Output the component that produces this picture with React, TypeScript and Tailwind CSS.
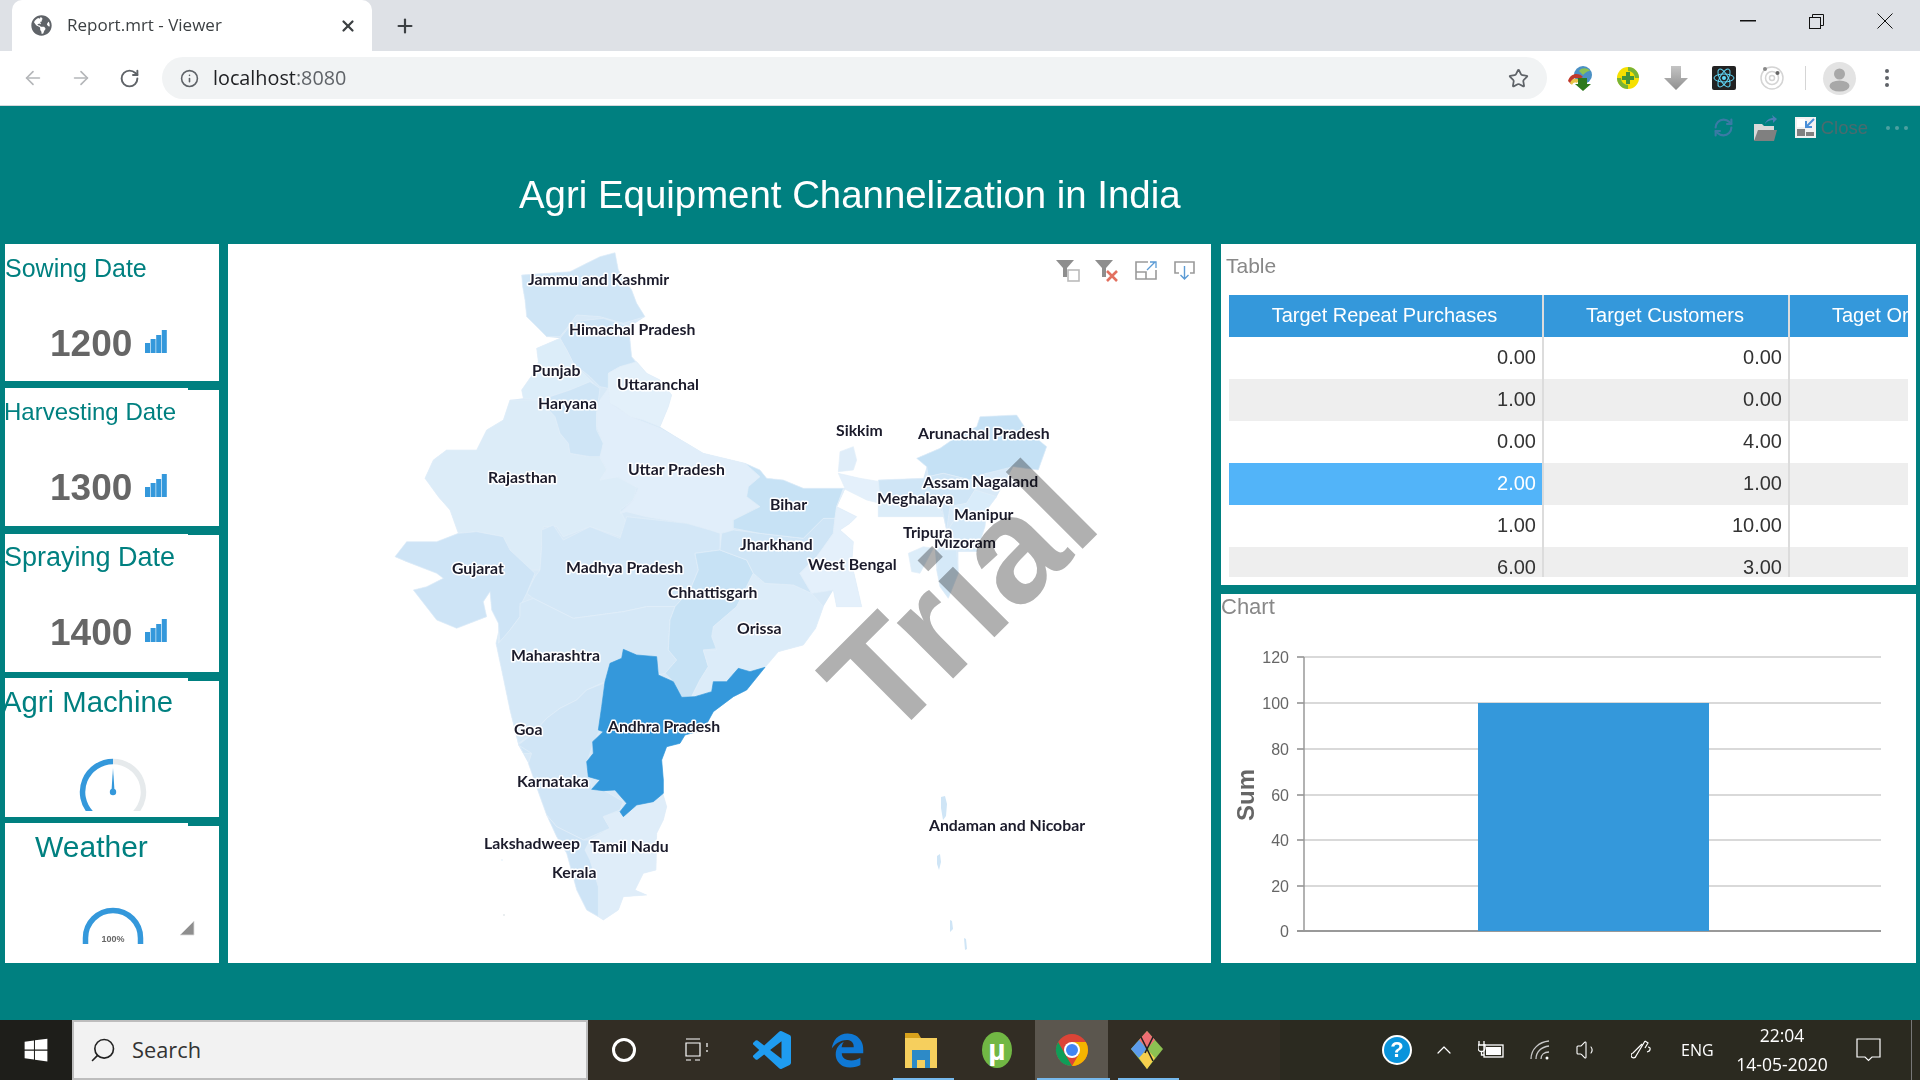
import React from "react";
import { ArrowLeft, ArrowRight, RotateCw, RefreshCw, Info, Star, Plus, X, Search, ChevronUp, Volume1 } from "lucide-react";
import { FaGlobeAmericas, FaWindows, FaEdgeLegacy } from "react-icons/fa";

const z6 = (s: string) => s.split(" ").map((p) => { const [x, y] = p.split(","); return `${x},${+y + 1140}`; }).join(" ");
const z7 = (s: string) => s.split(" ").map((p) => { const [x, y] = p.split(","); return `${+x + 1290},${y}`; }).join(" ");

const base: string[] = [
  "455,105 530,100 600,95 650,70 690,50 735,38 745,90 785,150 800,190 825,230 780,260 780,300 785,350 800,365 830,400 870,420 905,465 895,500 870,560 950,610 1000,640 1125,670 1170,690 1190,715 1240,720 1300,745 1425,745 1400,800 1460,830 1440,850 1410,870 1450,905 1445,970 1475,1100 1400,1100 1390,1050 1360,1100 1337,1165 " +
    z6("1300,75 1225,95 1185,142 1130,210 1090,230 1030,275 1000,330 945,345 930,370 890,380 875,420 880,480 880,525 890,560 880,600 860,640 858,750 820,760 795,810 830,825 760,830 745,870 700,900 685,890 650,870 620,810 590,700 560,650 530,585 510,530 475,430 445,375 420,270 395,150 378,70 385,40") +
    " 385,1150 365,1110 360,1055 340,1085 350,1130 260,1165 200,1140 130,1050 170,1040 220,1015 200,1000 110,965 75,950 110,905 200,905 265,880 240,810 205,770 165,715 190,660 230,630 320,630 350,570 400,540 420,480 460,475 455,450 490,400 505,365 500,325 570,295 530,290 505,265 470,230 465,180 458,140",
  z7("235,720 370,715 380,680 350,655 420,625 470,590 530,560 540,530 650,525 680,570 740,620 715,690 640,680 590,770 560,810 555,860 530,935 475,935 475,1000 445,1075 420,1040 410,990 405,930 440,875 430,830 235,830"),
];

const states: { f: string; p: string }[] = [
  { f: "#cfe5f6", p: "455,105 530,100 600,95 650,70 690,50 735,38 745,90 785,150 800,190 825,230 760,250 690,230 620,225 590,265 570,290 530,290 505,265 470,230 465,180 458,140" },
  { f: "#cde4f6", p: "570,295 610,245 700,235 780,260 780,300 785,350 800,370 750,380 715,400 715,445 690,440 660,410 610,370 590,330" },
  { f: "#dcedf9", p: "500,325 570,295 590,330 610,370 650,410 670,430 600,450 510,480 460,475 455,450 490,400 505,365" },
  { f: "#dcecf8", p: "420,480 510,480 555,530 570,580 595,610 600,640 660,650 690,650 710,690 690,720 740,710 800,740 790,780 750,810 770,850 750,890 660,860 580,890 560,860 520,860 515,920 510,990 480,990 420,930 400,890 320,875 265,880 240,810 205,770 165,715 190,660 230,630 320,630 350,570 400,540" },
  { f: "#cfe5f6", p: "510,480 600,450 660,425 690,445 680,520 680,570 700,610 695,650 660,650 600,640 595,610 570,580 555,530" },
  { f: "#e3f0fa", p: "715,400 750,380 800,365 830,400 870,420 905,465 895,500 870,560 820,540 780,530 740,500 720,490 715,445" },
  { f: "#e1eefa", p: "690,480 715,445 720,490 780,530 870,565 950,610 1000,640 1125,670 1170,710 1135,740 1130,770 1170,800 1090,840 1090,870 1055,880 1050,930 1020,870 950,850 830,830 770,815 750,820 790,780 805,745 745,710 690,720 710,690 690,650 700,610 680,560 680,520" },
  { f: "#d3e7f7", p: "515,870 550,855 580,900 660,860 750,895 770,830 950,850 1020,870 1050,880 1050,930 975,940 985,990 960,1050 915,1100 830,1100 760,1115 610,1135 490,1075 470,1060 495,1010 510,990 515,920" },
  { f: "#cee4f6", p: "75,950 110,905 200,905 265,880 320,875 400,890 420,930 495,1000 470,1060 450,1100 450,1130 420,1170 390,1210 385,1150 365,1110 360,1055 340,1085 350,1130 260,1165 200,1140 130,1050 170,1040 220,1015 200,1000 110,965" },
  { f: "#d5e8f7", p: "385,1210 420,1170 450,1130 450,1090 490,1075 610,1135 760,1115 830,1100 915,1100 900,1140 " + z6("895,90 920,120 885,160 865,165 860,110 800,105 760,88 755,115 720,130 705,185 650,210 620,240 570,265 530,295 490,340 445,370 420,270 395,150 378,70 385,40") },
  { f: "#cfe5f6", p: z6("445,372 490,345 485,400 460,400") },
  { f: "#d0e5f6", p: z6("700,190 650,210 620,240 570,265 530,295 490,340 445,375 485,400 475,430 510,530 530,585 560,620 640,660 720,625 700,590 750,570 760,545 700,510 665,505 660,480 650,430 670,370 690,330 695,260 705,190") },
  { f: "#dfedf9", p: z6("760,590 800,555 850,545 880,525 890,560 880,600 860,640 858,750 820,760 795,810 830,825 760,830 745,870 700,900 685,890 685,800 660,720 645,690 660,660 720,625 700,590 750,575") },
  { f: "#cee4f6", p: z6("530,585 560,620 640,660 660,660 645,690 660,720 685,800 685,890 650,870 620,810 590,700 560,650") },
  { f: "#c7e2f5", p: "975,940 1050,930 1130,960 1150,1000 1100,1100 1030,1160 1050,1225 " + z6("1000,90 1015,140 990,180 965,230 935,232 910,185 885,160 920,120 895,90 900,0") + " 915,1100 960,1050 985,990" },
  { f: "#dcecf9", p: "1150,1000 1185,1030 1270,1035 1325,1060 1360,1100 1337,1165 " + z6("1300,75 1225,95 1185,142 1140,155 1105,145 1070,185 1030,185 1025,215 965,230 990,180 1015,140 1000,90 1040,90 1025,50 1030,20") + " 1100,1100" },
  { f: "#cfe5f6", p: "1090,870 1170,880 1300,895 1360,835 1395,835 1390,880 1360,925 1340,950 1290,1000 1325,1060 1270,1035 1185,1030 1150,1000 1130,960 1050,930 1055,880" },
  { f: "#c7e2f5", p: "1125,670 1170,690 1190,715 1240,720 1300,745 1425,745 1400,800 1395,835 1360,835 1300,895 1170,880 1090,865 1090,840 1170,800 1130,770 1135,740 1170,710" },
  { f: "#e4f0fb", p: "1405,700 1470,715 1530,725 1530,790 1490,780 1420,745 1400,800 1460,830 1440,850 1410,870 1450,905 1445,970 1475,1100 1400,1100 1390,1050 1325,1060 1290,1000 1340,950 1390,880 1395,835 1400,800 1425,745" },
  { f: "#dfedf9", p: "1410,635 1450,620 1460,660 1450,690 1405,695" },
  { f: "#c5e1f5", p: z7("350,655 420,625 470,590 530,560 540,530 650,525 680,570 740,620 715,690 640,680 560,700 510,720 430,700 385,710 380,680") },
  { f: "#cfe5f6", p: z7("235,720 370,715 385,710 430,700 510,720 560,700 525,750 500,790 450,800 440,870 425,800 350,785 240,780") },
  { f: "#dcedf9", p: z7("235,785 350,790 420,805 430,830 330,830 235,830") },
  { f: "#d9ecfa", p: z7("525,750 590,770 560,810 470,830 450,800 500,790") },
  { f: "#d5e9f8", p: z7("470,830 560,810 555,860 530,935 470,930 440,875") },
  { f: "#d5e9f8", p: z7("420,930 470,930 475,1000 445,1075 420,1040 410,990") },
  { f: "#dcedf9", p: z7("325,940 370,920 400,925 360,1000 335,995") },
  { f: "#3498db", p: z6("760,88 800,105 860,110 865,165 910,185 935,232 975,230 1025,215 1030,185 1070,185 1105,145 1140,155 1185,142 1130,210 1090,230 1030,275 1000,330 945,345 930,370 890,380 875,420 880,480 880,520 850,545 800,555 760,590 750,575 770,550 735,510 700,512 665,508 690,480 655,470 650,425 670,400 668,365 700,335 685,330 695,260 705,185 720,130 755,115") },
];

const labels: [string, number, number][] = [
  ["Jammu and Kashmir", 528, 278], ["Himachal Pradesh", 569, 328], ["Punjab", 532, 369], ["Haryana", 538, 402],
  ["Uttaranchal", 617, 383], ["Rajasthan", 488, 476], ["Uttar Pradesh", 628, 468], ["Bihar", 770, 503],
  ["Jharkhand", 740, 543], ["Gujarat", 452, 567], ["Madhya Pradesh", 566, 566], ["Chhattisgarh", 668, 591],
  ["Orissa", 737, 627], ["Maharashtra", 511, 654], ["Andhra Pradesh", 608, 725], ["Goa", 514, 728],
  ["Karnataka", 517, 780], ["Lakshadweep", 484, 842], ["Tamil Nadu", 590, 845], ["Kerala", 552, 871],
  ["Sikkim", 836, 429], ["Arunachal Pradesh", 918, 432], ["Mizoram", 934, 541], ["Assam", 923, 481], ["Nagaland", 972, 480],
  ["Meghalaya", 877, 497], ["Manipur", 954, 513], ["Tripura", 903, 531], ["West Bengal", 808, 563],
  ["Andaman and Nicobar", 929, 824],
];

function Bars() {
  return (
    <svg width="22" height="23" viewBox="0 0 22 23" className="block mb-[5px] -ml-[1px]">
      <rect x="0" y="13" width="5" height="10" fill="#3498db" />
      <rect x="5.6" y="9" width="5" height="14" fill="#3498db" />
      <rect x="11.2" y="5" width="5" height="18" fill="#3498db" />
      <rect x="16.8" y="0" width="5" height="23" fill="#3498db" />
    </svg>
  );
}

function Card({ title, titleClass, notch, body, gapClass, children }: { title: string; titleClass: string; notch: string; body: string; gapClass: string; children: React.ReactNode }) {
  return (
    <div className={gapClass}>
      <div className={`w-[183px] bg-white ${notch}`} />
      <div className={`bg-white overflow-hidden ${body}`}>
        <div className={`text-[#008080] whitespace-nowrap ${titleClass}`}>{title}</div>
        {children}
      </div>
    </div>
  );
}

function Num({ v }: { v: string }) {
  return (
    <div className="flex items-center pl-[45px] gap-[14px] h-[40px] mt-[42px]">
      <span className="text-[37px] leading-[40px] font-bold text-[#666666]">{v}</span>
      <Bars />
    </div>
  );
}

function MapPanel() {
  return (
    <div className="w-[983px] h-[719px] bg-white">
      <svg width="983" height="719" viewBox="228 244 983 719" className="block">
        <g transform="translate(370 240) scale(0.33333)">
          {base.map((p, i) => (
            <polygon key={i} points={p} fill="#d8e9f7" />
          ))}
          {states.map((s, i) => (
            <polygon key={i} points={s.p} fill={s.f} stroke={s.f === "#3498db" ? "#3498db" : "#e3eff9"} strokeWidth="2" strokeLinejoin="round" />
          ))}
        </g>
        <path d="M941 797l4-1 2 8-1 12-3 4-2-12zM937 856l3-2 1 8-2 8-2-6zM950 920l2 1 1 8-3 3zM964 938l2 1 1 10-2 1z" fill="#cfe5f6" />
        <circle cx="502" cy="860" r="0.8" fill="#dcedf9" />
        <circle cx="504" cy="915" r="0.8" fill="#cfd8de" />
        {labels.map(([t, x, y]) => (
          <text key={t} x={x} y={y} dominantBaseline="central" className="font-['Lato',sans-serif] font-bold text-[15.800px] fill-[#1b1b2b] stroke-white stroke-[3px] [paint-order:stroke] [stroke-linejoin:round]">{t}</text>
        ))}
        <text x="959" y="599" textAnchor="middle" dominantBaseline="central" transform="rotate(-45 959 599)" className="font-['Liberation_Sans',sans-serif] font-bold text-[150px] fill-[#b0b0b0] mix-blend-multiply">Trial</text>
        <g transform="translate(1056 260)">
          <path d="M0 0h18l-7 8v9h-4v-9z" fill="#8e8e8e" />
          <rect x="12" y="10" width="11" height="11" fill="#fff" stroke="#bbb" strokeWidth="1.6" />
        </g>
        <g transform="translate(1095 260)">
          <path d="M0 0h18l-7 8v9h-4v-9z" fill="#8e8e8e" />
          <path d="M12 11l10 10M22 11l-10 10" stroke="#e2705f" strokeWidth="2.6" />
        </g>
        <g transform="translate(1135 261)" fill="none">
          <path d="M13 1H1v17h20V9M1 11h10v7" stroke="#9a9a9a" strokeWidth="1.6" />
          <path d="M12 9l8-8M15 1h6v6" stroke="#5b9bd5" strokeWidth="1.3" />
        </g>
        <g transform="translate(1174 261)" fill="none">
          <path d="M5 12H1V1h19v11h-4" stroke="#9a9a9a" strokeWidth="1.6" />
          <path d="M10.500 5v13M6.500 14l4 4 4-4" stroke="#5b9bd5" strokeWidth="1.4" />
        </g>
      </svg>
    </div>
  );
}

function TablePanel() {
  const rows: [string, string][] = [["0.00", "0.00"], ["1.00", "0.00"], ["0.00", "4.00"], ["2.00", "1.00"], ["1.00", "10.00"], ["6.00", "3.00"]];
  return (
    <div className="h-[341px] bg-white pl-[8px] pr-[8px]">
      <div className="h-[51px] text-[21px] leading-[44px] text-[#888888] -ml-[3px]">Table</div>
      <div className="h-[282px] overflow-hidden">
        <div className="grid grid-cols-[315px_246px_240px] h-[42px] bg-[#3498db] text-white text-[20px] leading-[40px]">
          <div className="text-center pr-[2px] border-r-2 border-[#dcdcdc] whitespace-nowrap">Target Repeat Purchases</div>
          <div className="text-center pr-[2px] border-r-2 border-[#dcdcdc] whitespace-nowrap">Target Customers</div>
          <div className="pl-[42px] whitespace-nowrap">Taget Orders</div>
        </div>
        {rows.map(([a, b], i) => (
          <div key={i} className={`grid grid-cols-[315px_246px_240px] h-[42px] text-[20px] leading-[40px] text-[#333333] ${i % 2 ? "bg-[#eeeeee]" : "bg-white"}`}>
            <div className={`text-right pr-[6px] border-r-2 border-[#dcdcdc] ${i === 3 ? "bg-[#52b4f9] text-white" : ""}`}>{a}</div>
            <div className="text-right pr-[6px] border-r-2 border-[#dcdcdc]">{b}</div>
            <div />
          </div>
        ))}
      </div>
    </div>
  );
}

function ChartPanel() {
  const ticks = [[120, 657], [100, 703], [80, 749], [60, 795], [40, 840], [20, 886], [0, 931]];
  return (
    <div className="h-[369px] bg-white">
      <div className="h-[30px] text-[22px] leading-[25px] text-[#888888]">Chart</div>
      <svg width="695" height="339" viewBox="1221 624 695 339" className="block">
        {ticks.map(([v, y]) => (
          <g key={v}>
            <line x1="1297" x2="1881" y1={y} y2={y} stroke={v === 0 ? "#999999" : "#cccccc"} strokeWidth={v === 0 ? 2 : 1.5} />
            <line x1="1297" x2="1304" y1={y} y2={y} stroke="#999999" strokeWidth="1.5" />
            <text x="1289" y={y} textAnchor="end" dominantBaseline="central" className="font-['Liberation_Sans',sans-serif] text-[16px] fill-[#666666]">{v}</text>
          </g>
        ))}
        <line x1="1304" x2="1304" y1="657" y2="932" stroke="#999999" strokeWidth="1.500" />
        <rect x="1478" y="703" width="231" height="228" fill="#3498db" />
        <text x="1245" y="795" textAnchor="middle" dominantBaseline="central" transform="rotate(-90 1245 795)" className="font-['Liberation_Sans',sans-serif] font-bold text-[24px] fill-[#666666]">Sum</text>
      </svg>
    </div>
  );
}

function Chrome() {
  return (
    <svg width="36" height="36" viewBox="-18 -18 36 36">
      <circle r="16" fill="#db4437" />
      <path d="M-13.900 8A16 16 0 0 1-13.900-8L-7 4 0 16A16 16 0 0 1-13.900 8z" fill="#0f9d58" />
      <path d="M0 16A16 16 0 0 0 16 0 16 16 0 0 0 13.900-8H0L7 4z" fill="#f4b400" />
      <circle r="8" fill="#fff" />
      <circle r="6" fill="#4285f4" />
    </svg>
  );
}

export default function App() {
  return (
    <div className="w-[1920px] h-[1080px] overflow-hidden flex flex-col font-['Liberation_Sans',Arial,sans-serif]">
      <div className="h-[51px] bg-[#dee1e6] flex items-stretch shrink-0">
        <div className="ml-[12px] w-[360px] bg-white rounded-t-[10px] flex items-center pl-[19px] pr-[15px] font-['Open_Sans',sans-serif] text-[#3c4043]">
          <FaGlobeAmericas size={21} color="#5f6368" />
          <span className="ml-[15px] pb-[2px] text-[17px] flex-1 whitespace-nowrap">Report.mrt - Viewer</span>
          <X size={18} strokeWidth={3} color="#3c4043" />
        </div>
        <div className="ml-[22px] flex items-center"><Plus size={22} strokeWidth={2.4} color="#3c4043" /></div>
        <div className="flex-1" />
        <div className="flex items-center pr-[27px] h-[42px] gap-[53px]">
          <svg width="16" height="2" className="block"><rect width="16" height="1.500" fill="#111" /></svg>
          <svg width="15" height="15" viewBox="0 0 15 15" fill="none" stroke="#111" strokeWidth="1"><rect x="0.500" y="3.500" width="11" height="11" /><path d="M3.500 3.500V.5h11v11h-3" /></svg>
          <svg width="16" height="16" viewBox="0 0 16 16" stroke="#111" strokeWidth="1"><path d="M.5.5l15 15M15.500.5l-15 15" /></svg>
        </div>
      </div>
      <div className="h-[55px] bg-white border-b border-[#d5d8dc] flex items-center shrink-0">
        <ArrowLeft className="ml-[22px]" size={22} color="#b4b6b9" strokeWidth={1.8} />
        <ArrowRight className="ml-[26px]" size={22} color="#b4b6b9" strokeWidth={1.8} />
        <RotateCw className="ml-[27px]" size={21} color="#5f6368" strokeWidth={2.2} />
        <div className="ml-[22px] w-[1385px] h-[42px] bg-[#f1f3f4] rounded-full flex items-center pl-[18px] pr-[18px] font-['Open_Sans',sans-serif]">
          <Info size={19} color="#5f6368" />
          <span className="ml-[14px] text-[19.800px] text-[#202124]">localhost<span className="text-[#5f6368]">:8080</span></span>
          <span className="flex-1" />
          <Star size={21} color="#5f6368" strokeWidth={2} />
        </div>
        <div className="ml-[20px] flex items-center">
          <svg width="26" height="26" viewBox="0 0 26 26">
            <circle cx="16" cy="10" r="9" fill="#4a90c4" />
            <path d="M12 6c3-4 9-3 11 0-3 0-5 2-7 4z" fill="#8cc152" />
            <path d="M1 16C3 8 12 7 16 12l-4 2C9 12 5 13 4 19z" fill="#c0392b" />
            <path d="M3 18C5 13 9 13 12 15l-2 3c-3-1-4 0-5 2z" fill="#e8c547" />
            <path d="M11 13h9v6h4l-8 7-8-7h3z" fill="#2d7a1e" />
          </svg>
          <svg className="ml-[24px]" width="22" height="22" viewBox="0 0 22 22">
            <circle cx="11" cy="11" r="11" fill="#f6e000" />
            <path d="M11 0a11 11 0 0 1 11 11h-4a7 7 0 0 0-7-7zM11 22A11 11 0 0 1 0 11h4a7 7 0 0 0 7 7z" fill="#57a745" opacity="0.800" />
            <path d="M9 5h4v4h4v4h-4v4H9v-4H5V9h4z" fill="#43933a" />
          </svg>
          <svg className="ml-[25px]" width="24" height="24" viewBox="0 0 24 24">
            <defs><linearGradient id="dl" x1="0" x2="0" y1="0" y2="1"><stop offset="0" stopColor="#c4c4c4" /><stop offset="1" stopColor="#8f8f8f" /></linearGradient></defs>
            <path d="M7 0h10v12h7L12 24 0 12h7z" fill="url(#dl)" />
          </svg>
          <div className="ml-[24px] w-[24px] h-[24px] bg-[#222222] rounded-[2px] flex items-center justify-center">
            <svg width="22" height="22" viewBox="-11 -11 22 22" fill="none" stroke="#61dafb" strokeWidth="1">
              <ellipse rx="10" ry="4" /><ellipse rx="10" ry="4" transform="rotate(60)" /><ellipse rx="10" ry="4" transform="rotate(120)" />
              <circle r="2" fill="#61dafb" stroke="none" />
            </svg>
          </div>
          <svg className="ml-[24px]" width="24" height="24" viewBox="0 0 24 24" fill="none" stroke="#d4d4d4" strokeWidth="1.500">
            <circle cx="12" cy="12" r="11" /><circle cx="12" cy="12" r="6.500" /><circle cx="12" cy="12" r="2.500" />
            <circle cx="5" cy="3" r="2" fill="#888" stroke="none" /><circle cx="17.500" cy="7" r="2" fill="#666" stroke="none" />
          </svg>
          <div className="ml-[21px] w-px h-[24px] bg-[#d5d5d5]" />
          <div className="ml-[17px] w-[33px] h-[33px] rounded-full bg-[#e3e3e3] overflow-hidden">
            <svg width="33" height="33" viewBox="0 0 33 33"><circle cx="16.500" cy="12" r="5.500" fill="#a8a8a8" /><ellipse cx="16.500" cy="24" rx="10" ry="5.500" fill="#a8a8a8" /></svg>
          </div>
          <svg className="ml-[28px]" width="6" height="20" viewBox="0 0 6 20" fill="#5f6368"><circle cx="3" cy="3" r="2" /><circle cx="3" cy="10" r="2" /><circle cx="3" cy="17" r="2" /></svg>
        </div>
      </div>
      <div className="h-[914px] bg-[#008080] shrink-0">
        <div className="h-[43px] flex items-center justify-end pr-[12px]">
          <RefreshCw size={21} color="#3a7aa5" strokeWidth={2.4} />
          <svg className="ml-[20px]" width="23" height="26" viewBox="0 0 23 26">
            <path d="M0 9h8l2 2h10v14H0z" fill="#d9d9d9" /><path d="M4 15h19l-3 11H0z" fill="#808080" /><path d="M11 9c1-4 5-6 8-6l-1-3 5 4-4 4V5c-3 0-6 1-8 4z" fill="#4a7fb5" />
          </svg>
          <svg className="ml-[18px]" width="21" height="21" viewBox="0 0 21 21">
            <rect width="21" height="21" fill="#f2f2f2" /><path d="M2 12h8v7H2zM11 15h8v4h-8z" fill="#808080" /><path d="M2 2h8v8H2z" fill="#fff" /><path d="M19 2l-8 8M11 4v6h6" stroke="#4a8fd8" strokeWidth="2" fill="none" />
          </svg>
          <span className="ml-[5px] text-[18.500px] text-[#4a6b6e]">Close</span>
          <span className="ml-[18px] flex gap-[5px]">
            <i className="w-[4px] h-[4px] rounded-full bg-[#4da0a0]" /><i className="w-[4px] h-[4px] rounded-full bg-[#4da0a0]" /><i className="w-[4px] h-[4px] rounded-full bg-[#4da0a0]" />
          </span>
        </div>
        <div className="mt-[23px] h-[72px] pl-[519px] text-white text-[38.400px] leading-[46px] whitespace-nowrap">Agri Equipment Channelization in India</div>
        <div className="flex h-[719px]">
          <div className="w-[214px] ml-[5px] flex flex-col">
            <Card title="Sowing Date" titleClass="text-[25px] leading-[28px] pt-[10px]" notch="h-0" body="h-[137px]" gapClass="mb-[7px]"><Num v="1200" /></Card>
            <Card title="Harvesting Date" titleClass="text-[24px] leading-[28px] pt-[8px] -ml-[1px]" notch="h-[2px]" body="h-[136px]" gapClass="mb-[8px]"><Num v="1300" /></Card>
            <Card title="Spraying Date" titleClass="text-[27px] leading-[28px] pt-[8px] -ml-[1px]" notch="h-[1px]" body="h-[137px]" gapClass="mb-[6px]"><Num v="1400" /></Card>
            <Card title="Agri Machine" titleClass="text-[29.300px] leading-[32px] pt-[5px] -ml-[3px]" notch="h-[3px]" body="h-[136px]" gapClass="mb-[6px]">
              <svg width="214" height="93" viewBox="5 718 214 93" className="block">
                <path d="M113 761.500a30.500 30.500 0 0 1 21.600 52" fill="none" stroke="#e6eaec" strokeWidth="5.500" />
                <path d="M113 761.500a30.500 30.500 0 0 0-21.600 52" fill="none" stroke="#3498db" strokeWidth="5.500" />
                <path d="M113 768l1.600 24h-3.200z" fill="#3498db" />
                <circle cx="113" cy="792" r="3.200" fill="#3498db" />
              </svg>
            </Card>
            <Card title="Weather" titleClass="text-[30px] leading-[34px] pt-[4px] pb-[2px] pl-[30px]" notch="h-[3px]" body="h-[137px]" gapClass="">
              <svg width="214" height="97" viewBox="5 866 214 97" className="block">
                <path d="M85.500 944v-6a27.500 27.500 0 0 1 55 0v6" fill="none" stroke="#3498db" strokeWidth="5.500" />
                <text x="113" y="939" textAnchor="middle" dominantBaseline="central" className="font-bold text-[9px] fill-[#666666]">100%</text>
                <path d="M180 935l14-14v14z" fill="#8e8e8e" stroke="#dddddd" strokeWidth="0.800" />
              </svg>
            </Card>
          </div>
          <div className="ml-[9px]"><MapPanel /></div>
          <div className="ml-[10px] w-[695px] flex flex-col gap-[9px]">
            <TablePanel />
            <ChartPanel />
          </div>
        </div>
      </div>
      <div className="h-[60px] bg-[#2b2a20] flex items-center shrink-0 relative">
        <div className="w-[72px] h-full shrink-0 bg-[#1e1e1a] flex items-center justify-center"><FaWindows size={26} color="#ffffff" /></div>
        <div className="w-[516px] h-full shrink-0 bg-[#f2f2f2] border-2 border-[#bdbdbd] flex items-center pl-[15px]">
          <Search size={28} color="#222222" strokeWidth={1.4} className="-scale-x-100" />
          <span className="ml-[15px] text-[21.800px] text-[#333333] font-['Open_Sans',sans-serif]">Search</span>
        </div>
        <div className="flex-1 min-w-0 h-full flex items-center">
          <div className="h-full flex items-center bg-[#322d24] w-[692px] shrink-0">
            <div className="ml-[24px] w-[24px] h-[24px] rounded-full border-[3px] border-white" />
            <svg className="ml-[47px]" width="26" height="24" viewBox="0 0 26 24" fill="none" stroke="#fff" strokeWidth="1.200">
              <path d="M3 1h14M3 5h14v13H3zM3 22h5M12 22h5M24 5v4M24 12v2" />
            </svg>
            <svg className="ml-[44px]" width="38" height="38" viewBox="0 0 24 24" fill="#1f9cf0">
              <path d="M23.150 2.587L18.210.21a1.494 1.494 0 0 0-1.705.29l-9.460 8.630-4.120-3.128a.999.999 0 0 0-1.276.057L.327 7.261A1 1 0 0 0 .326 8.740L3.899 12 .326 15.260a1 1 0 0 0 .001 1.479L1.650 17.940a.999.999 0 0 0 1.276.057l4.120-3.128 9.460 8.630a1.492 1.492 0 0 0 1.704.29l4.942-2.377A1.500 1.500 0 0 0 24 20.060V3.939a1.500 1.500 0 0 0-.850-1.352zm-5.146 14.861L10.826 12l7.178-5.448v10.896z" />
            </svg>
            <div className="ml-[37px] w-[38px] flex justify-center"><FaEdgeLegacy size={35} color="#0f78d4" /></div>
            <svg className="ml-[38px]" width="34" height="36" viewBox="0 0 34 36">
              <path d="M1 1h13l3 5H1z" fill="#d8a21c" /><path d="M1 6h32v30H1z" fill="#f6cf5d" /><path d="M8 18h18v18h-5v-8h-8v8H8z" fill="#2d8ac7" />
            </svg>
            <div className="ml-[44px] w-[30px] h-[36px] rounded-[50%] bg-[#71b744] flex items-center justify-center text-white text-[30px] font-bold leading-none">µ</div>
            <div className="ml-[23px] w-[73px] h-full bg-[#5b564e] flex items-center justify-center"><Chrome /></div>
            <svg className="ml-[23px]" width="32" height="38" viewBox="0 0 32 38">
              <path d="M16 0l16 18-16 20L0 18z" fill="#8cc152" /><path d="M16 0L8 9l8 9 8-9z" fill="#ee6e73" /><path d="M0 18l8-9 8 9-8 9z" fill="#5d9cec" /><path d="M16 18l8 9-8 11-8-11z" fill="#f6d04d" />
              <path d="M10 6l12 24M22 6L14 22" stroke="#222" strokeWidth="1.600" />
            </svg>
          </div>
          <div className="ml-[102px] w-[30px] h-[30px] shrink-0 rounded-full bg-[#0a94dc] border-2 border-white flex items-center justify-center text-white font-bold text-[22px] leading-none">?</div>
          <ChevronUp className="ml-[20px] shrink-0" size={24} color="#ffffff" strokeWidth={1.2} />
          <svg className="ml-[22px] shrink-0" width="27" height="18" viewBox="0 0 27 18" fill="none" stroke="#fff" strokeWidth="1.300"><path d="M1 0v4M6 0v4M0 4h7v3a3 3 0 0 1-7 0zM3.500 10v4h3" /><rect x="6" y="4" width="19" height="12" /><rect x="8" y="6" width="15" height="8" fill="#fff" stroke="none" /></svg>
          <svg className="ml-[25px] shrink-0" width="20" height="20" viewBox="0 0 20 20" fill="none" stroke="#c9c9c9" strokeWidth="1.300"><path d="M1 19C1 9 9 2 19 1M6 19c0-7 5-12 13-13M11 19c0-4 3-7 8-7" /><circle cx="17" cy="18" r="1.500" fill="#fff" stroke="none" /></svg>
          <Volume1 className="ml-[25px] shrink-0" size={24} color="#ffffff" strokeWidth={1.1} />
          <svg className="ml-[32px] shrink-0" width="22" height="22" viewBox="0 0 22 22" fill="none" stroke="#fff" strokeWidth="1.200"><path d="M14 2l-9 15a2.500 2.500 0 1 1-3-3l9-9M14 2l3 2-3 5M17 8c3 0 3 4-1 5" /></svg>
          <span className="ml-[28px] w-[36px] shrink-0 text-[16px] text-white font-['Open_Sans',sans-serif]">ENG</span>
          <div className="ml-[18px] w-[94px] shrink-0 text-center text-white text-[17.500px] leading-[29px] font-['Open_Sans',sans-serif] whitespace-nowrap">
            <div>22:04</div><div>14-05-2020</div>
          </div>
          <svg className="ml-[27px] shrink-0" width="25" height="24" viewBox="0 0 25 24" fill="none" stroke="#fff" strokeWidth="1.200"><path d="M1 1h23v18h-8l-3.500 3.500L9 19H1z" /></svg>
          <div className="ml-[30px] w-px h-full shrink-0 bg-[#777777]" />
        </div>
        <div className="absolute left-[893px] bottom-0 w-[61px] h-[2px] bg-[#76b9ed]" />
        <div className="absolute left-[1037px] bottom-0 w-[73px] h-[2px] bg-[#76b9ed]" />
        <div className="absolute left-[1118px] bottom-0 w-[61px] h-[2px] bg-[#76b9ed]" />
      </div>
    </div>
  );
}
